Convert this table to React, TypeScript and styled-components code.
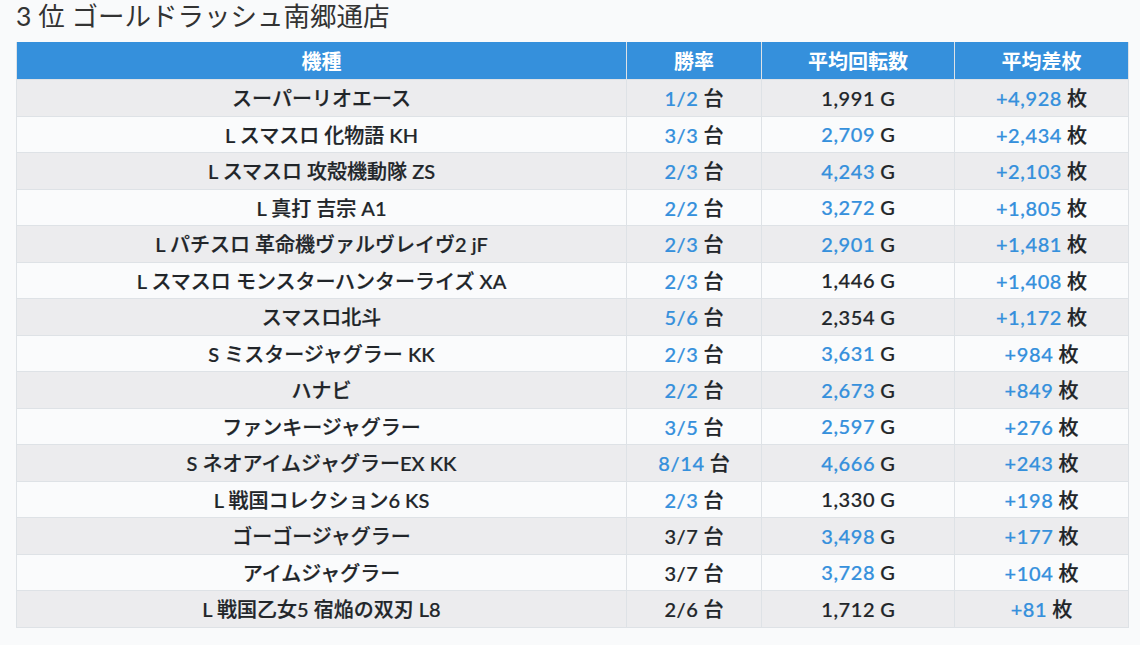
import styled, { createGlobalStyle } from "styled-components";

const GlobalStyle = createGlobalStyle`
  html, body {
    margin: 0;
    padding: 0;
    background: #f9fafb;
  }
  body {
    font-family: Lato, "Noto Sans CJK JP", sans-serif;
    color: #212529;
  }
`;

//#region styled css
const Page = styled.div`
  padding: 0 16px;
`;

const Title = styled.h2`
  margin: 0;
  height: 42px;
  line-height: 33px;
  font-size: 26.5px;
  font-weight: 400;
  color: #333;
`;

const Table = styled.table`
  width: 1108px;
  border-collapse: collapse;
  table-layout: fixed;
  font-size: 20px;
  font-weight: 500;
`;

const HeadCell = styled.th<{ $w: number }>`
  width: ${(p) => p.$w}px;
  height: 37px;
  padding: 0;
  background: #3590dc;
  color: #fff;
  font-weight: 700;
  text-align: center;
  border: 1px solid #dee2e6;
  border-top: none;
`;

const Row = styled.tr<{ $odd: boolean }>`
  background: ${(p) => (p.$odd ? "#ececee" : "#fafbfc")};
`;

const Cell = styled.td`
  height: 36.5px;
  padding: 0;
  text-align: center;
  border: 1px solid #dee2e6;
  box-sizing: border-box;
  -webkit-text-stroke: 0.22px;
`;

const Num = styled.span<{ $blue: boolean }>`
  letter-spacing: 0.6px;
  color: ${(p) => (p.$blue ? "#3590dc" : "#212529")};
`;
//#endregion

type Item = {
  name: string;
  win: string;
  winBlue: boolean;
  games: string;
  gamesBlue: boolean;
  diff: string;
};

const items: Item[] = [
  { name: "スーパーリオエース", win: "1/2", winBlue: true, games: "1,991", gamesBlue: false, diff: "+4,928" },
  { name: "L スマスロ 化物語 KH", win: "3/3", winBlue: true, games: "2,709", gamesBlue: true, diff: "+2,434" },
  { name: "L スマスロ 攻殻機動隊 ZS", win: "2/3", winBlue: true, games: "4,243", gamesBlue: true, diff: "+2,103" },
  { name: "L 真打 吉宗 A1", win: "2/2", winBlue: true, games: "3,272", gamesBlue: true, diff: "+1,805" },
  { name: "L パチスロ 革命機ヴァルヴレイヴ2 jF", win: "2/3", winBlue: true, games: "2,901", gamesBlue: true, diff: "+1,481" },
  { name: "L スマスロ モンスターハンターライズ XA", win: "2/3", winBlue: true, games: "1,446", gamesBlue: false, diff: "+1,408" },
  { name: "スマスロ北斗", win: "5/6", winBlue: true, games: "2,354", gamesBlue: false, diff: "+1,172" },
  { name: "S ミスタージャグラー KK", win: "2/3", winBlue: true, games: "3,631", gamesBlue: true, diff: "+984" },
  { name: "ハナビ", win: "2/2", winBlue: true, games: "2,673", gamesBlue: true, diff: "+849" },
  { name: "ファンキージャグラー", win: "3/5", winBlue: true, games: "2,597", gamesBlue: true, diff: "+276" },
  { name: "S ネオアイムジャグラーEX KK", win: "8/14", winBlue: true, games: "4,666", gamesBlue: true, diff: "+243" },
  { name: "L 戦国コレクション6 KS", win: "2/3", winBlue: true, games: "1,330", gamesBlue: false, diff: "+198" },
  { name: "ゴーゴージャグラー", win: "3/7", winBlue: false, games: "3,498", gamesBlue: true, diff: "+177" },
  { name: "アイムジャグラー", win: "3/7", winBlue: false, games: "3,728", gamesBlue: true, diff: "+104" },
  { name: "L 戦国乙女5 宿焔の双刃 L8", win: "2/6", winBlue: false, games: "1,712", gamesBlue: false, diff: "+81" },
];

const App = () => {
  return (
    <>
      <GlobalStyle />
      <Page>
        <Title>3 位 ゴールドラッシュ南郷通店</Title>
        <Table>
          <thead>
            <tr>
              <HeadCell $w={609}>機種</HeadCell>
              <HeadCell $w={134}>勝率</HeadCell>
              <HeadCell $w={192}>平均回転数</HeadCell>
              <HeadCell $w={173}>平均差枚</HeadCell>
            </tr>
          </thead>
          <tbody>
            {items.map((it, i) => (
              <Row key={it.name} $odd={i % 2 === 0}>
                <Cell>{it.name}</Cell>
                <Cell>
                  <Num $blue={it.winBlue}>{it.win}</Num> 台
                </Cell>
                <Cell>
                  <Num $blue={it.gamesBlue}>{it.games}</Num> G
                </Cell>
                <Cell>
                  <Num $blue={true}>{it.diff}</Num> 枚
                </Cell>
              </Row>
            ))}
          </tbody>
        </Table>
      </Page>
    </>
  );
};

export default App;
